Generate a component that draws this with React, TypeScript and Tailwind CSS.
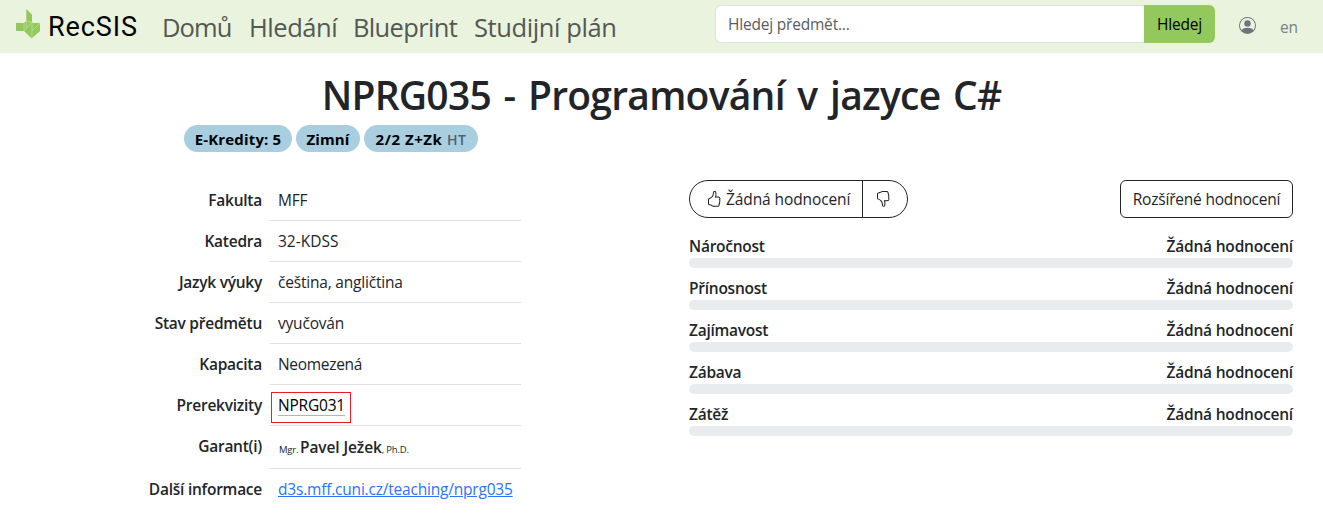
import React from "react";
import { BsHandThumbsUp, BsHandThumbsDown, BsPersonCircle } from "react-icons/bs";

const navItems = [
  { label: "Domů", cls: "ml-[24px] w-[71px] tracking-[-0.9px]" },
  { label: "Hledání", cls: "ml-[16px] w-[88px] tracking-[-0.45px]" },
  { label: "Blueprint", cls: "ml-[16px] w-[104px] tracking-[-0.65px]" },
  { label: "Studijní plán", cls: "ml-[17px] w-[144px] tracking-[-0.4px]" },
];

const ratings = ["Náročnost", "Přínosnost", "Zajímavost", "Zábava", "Zátěž"];

function Logo() {
  return (
    <svg className="h-[30px] w-[24px]" viewBox="0 0 24 30">
      <path fill="#93c85c" d="M10.3 0 16 5.8V13.2L17 14H24V22L15.7 29.5 8 22H0V14H8L10.3 12Z" />
      <path fill="none" stroke="#c3e1a4" strokeWidth="0.7" d="M8 14V22L16 13.2V29.2M10.3 12V19M16 13.2 10.3 12.3M16 21.8 24 14.2" />
    </svg>
  );
}

function Row({ label, last, tall, children }: { label: string; last?: boolean; tall?: boolean; children: React.ReactNode }) {
  return (
    <div className={`flex ${tall ? "h-[43px]" : "h-[41px]"}`}>
      <div className="w-[269px] pr-[7px] pt-2 text-right font-semibold tracking-[-0.25px]">{label}</div>
      <div className={`w-[252px] pl-[9px] pt-2 ${last ? "" : "border-b border-[#dee2e6]"}`}>{children}</div>
    </div>
  );
}

export default function App() {
  return (
    <div className="h-[523px] w-[1323px] overflow-hidden bg-white font-['Open_Sans','Noto_Sans',sans-serif] text-[15.5px] leading-6 tracking-[-0.2px] text-[#212529]">
      <header className="flex h-[53px] items-center bg-[#eaf3de]">
        <div className="ml-[16px] mt-[-5px]"><Logo /></div>
        <div className="ml-[8px] w-[90px] whitespace-nowrap font-['Roboto',sans-serif] text-[27px] tracking-[0.9px] text-black">RecSIS</div>
        <nav className="flex text-[25.5px] leading-8 text-[#545852]">
          {navItems.map((n) => (
            <a key={n.label} className={`whitespace-nowrap ${n.cls}`}>{n.label}</a>
          ))}
        </nav>
        <div className="ml-auto mb-[5px] flex h-[38px] w-[500px]">
          <div className="flex-1 rounded-l-md border border-r-0 border-[#dee2e6] bg-white py-[6px] pl-3 text-[#595c5f]">Hledej předmět...</div>
          <button className="w-[71px] rounded-r-md bg-[#93c85c] text-black">Hledej</button>
        </div>
        <BsPersonCircle className="mb-[2px] ml-[24px] h-[17px] w-[17px] text-[#6c757d]" />
        <span className="ml-[24px] mr-[26px] w-[17px] text-[#798287]">en</span>
      </header>

      <h1 className="mt-[18px] text-center text-[39px] font-semibold leading-[48px] tracking-[-0.75px] [word-spacing:3.2px]">NPRG035 - Programování v jazyce C#</h1>

      <div className="ml-[184px] mt-[6px] flex h-[27px] gap-1 text-[15px] font-bold leading-[28px] text-black">
        <span className="w-[108px] rounded-full bg-[#a8cee0] text-center tracking-[0.15px]">E-Kredity: 5</span>
        <span className="w-[64px] rounded-full bg-[#a8cee0] text-center tracking-[0.1px]">Zimní</span>
        <span className="w-[114px] rounded-full bg-[#a8cee0] text-center tracking-[0.55px]">2/2 Z+Zk <span className="text-[14px] font-semibold text-[#50616b]">HT</span></span>
      </div>

      <main className="mt-[28px] flex">
        <section className="w-[689px]">
          <Row label="Fakulta">MFF</Row>
          <Row label="Katedra"><span className="tracking-normal">32-KDSS</span></Row>
          <Row label="Jazyk výuky">čeština, angličtina</Row>
          <Row label="Stav předmětu">vyučován</Row>
          <Row label="Kapacita"><span className="tracking-[-0.3px]">Neomezená</span></Row>
          <Row label="Prerekvizity">
            <div className="-ml-[7px] -mt-[1px] h-[31px] w-[80px] border border-[#ed1c24] pl-[6px]">
              <span className="inline-block h-[23px] w-[67px] border-b border-[#b5b5b5] leading-[25px] text-black">NPRG031</span>
            </div>
          </Row>
          <Row label="Garant(i)" tall>
            <div className="flex items-baseline whitespace-nowrap pt-[1px]">
              <span className="w-[22px] pl-px text-[9.5px]">Mgr.</span>
              <span className="font-semibold tracking-[-0.1px]">Pavel Ježek</span>
              <span className="text-[9.5px]">, Ph.D.</span>
            </div>
          </Row>
          <Row label="Další informace" last>
            <a className="text-[#2a75f5] underline">d3s.mff.cuni.cz/teaching/nprg035</a>
          </Row>
        </section>

        <section className="w-[604px]">
          <div className="flex h-[38px] justify-between">
            <div className="flex w-[219px] rounded-full border border-[#212529]">
              <button className="flex w-[173px] items-center whitespace-nowrap border-r border-[#212529] pl-[16px] tracking-[-0.1px]">
                <BsHandThumbsUp className="mr-1 h-4 w-4" />
                Žádná hodnocení
              </button>
              <button className="flex flex-1 items-center pl-[12px]"><BsHandThumbsDown className="h-4 w-4" /></button>
            </div>
            <button className="w-[173px] whitespace-nowrap rounded-md border border-[#212529]">Rozšířené hodnocení</button>
          </div>
          <div className="mt-[16px]">
            {ratings.map((r) => (
              <div key={r} className="h-[42px]">
                <div className="flex justify-between font-semibold tracking-[-0.25px]">
                  <span>{r}</span>
                  <span className="tracking-[-0.2px]">Žádná hodnocení</span>
                </div>
                <div className="h-[10px] rounded-full bg-[#e9ecef]" />
              </div>
            ))}
          </div>
        </section>
      </main>
    </div>
  );
}
